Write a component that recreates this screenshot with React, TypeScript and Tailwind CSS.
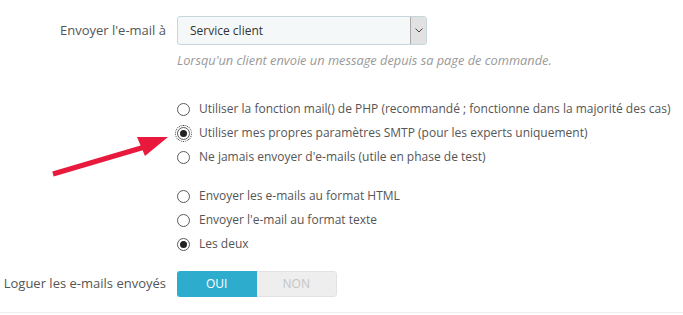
import React from 'react'

const font = { fontFamily: '"Open Sans", "Liberation Sans", sans-serif' }

function Radio({ checked, focused, label }: { checked?: boolean; focused?: boolean; label: string }) {
  return (
    <label className="flex items-center h-6 gap-[8px] text-[12px] text-[#555]">
      <span className={`flex items-center justify-center w-[15px] h-[15px] rounded-full ${focused ? 'outline outline-1 outline-dotted outline-[#333]' : ''}`}>
        <span className="flex items-center justify-center w-[13px] h-[13px] rounded-full border border-[#5a5a5a] bg-white">
          {checked && <span className="w-[7px] h-[7px] rounded-full bg-[#222]" />}
        </span>
      </span>
      <span>{label}</span>
    </label>
  )
}

export default function App() {
  return (
    <div className="relative w-[683px] h-[315px] bg-white overflow-hidden" style={font}>
      <div className="pt-4 pb-[15px] border-b border-[#eeeeee]">
        {/* destinataire */}
        <div className="flex items-center">
          <div className="w-[166px] text-right text-[13px] text-[#555]">Envoyer l'e-mail à</div>
          <div className="ml-[11px] flex h-[29px] w-[250px] border border-[#c7d6db] rounded-[3px] bg-[#f5f8f9] overflow-hidden">
            <div className="flex-1 flex items-center pl-3 text-[12px] text-[#333]">Service client</div>
            <div className="w-[16px] flex items-center justify-center bg-[#e1e1e1] border-l border-[#a9a9a9]">
              <svg width="8" height="5" viewBox="0 0 8 5">
                <path d="M0.5 0.5 L4 4 L7.5 0.5" fill="none" stroke="#444" strokeWidth="1" />
              </svg>
            </div>
          </div>
        </div>
        <p className="ml-[177px] mt-[6px] leading-[18px] text-[12.8px] italic text-[#999]">
          Lorsqu'un client envoie un message depuis sa page de commande.
        </p>

        <div className="ml-[176px] mt-[28px] flex flex-col">
          <Radio label="Utiliser la fonction mail() de PHP (recommandé ; fonctionne dans la majorité des cas)" />
          <Radio checked focused label="Utiliser mes propres paramètres SMTP (pour les experts uniquement)" />
          <Radio label="Ne jamais envoyer d'e-mails (utile en phase de test)" />
        </div>

        <div className="ml-[176px] mt-[15px] flex flex-col">
          <Radio label="Envoyer les e-mails au format HTML" />
          <Radio label="Envoyer l'e-mail au format texte" />
          <Radio checked label="Les deux" />
        </div>

        <div className="flex items-center mt-[15px]">
          <div className="w-[166px] text-right text-[13px] text-[#555]">Loguer les e-mails envoyés</div>
          <div className="ml-[11px] flex h-[26px] w-[160px] rounded-[3px] overflow-hidden text-[12px]">
            <div className="flex-1 flex items-center justify-center bg-[#2eacce] text-white">OUI</div>
            <div className="flex-1 flex items-center justify-center bg-[#eeeeee] text-[#c4c4c4] border border-l-0 border-[#e2e2e2] rounded-r-[3px]">NON</div>
          </div>
        </div>
      </div>

      {/* flèche rouge */}
      <svg className="absolute left-0 top-0 pointer-events-none" width="683" height="315">
        <line x1="53" y1="174" x2="148" y2="146" stroke="#e8193c" strokeWidth="5" />
        <polygon points="168,137 137,137 145,156" fill="#e8193c" />
      </svg>
    </div>
  )
}
